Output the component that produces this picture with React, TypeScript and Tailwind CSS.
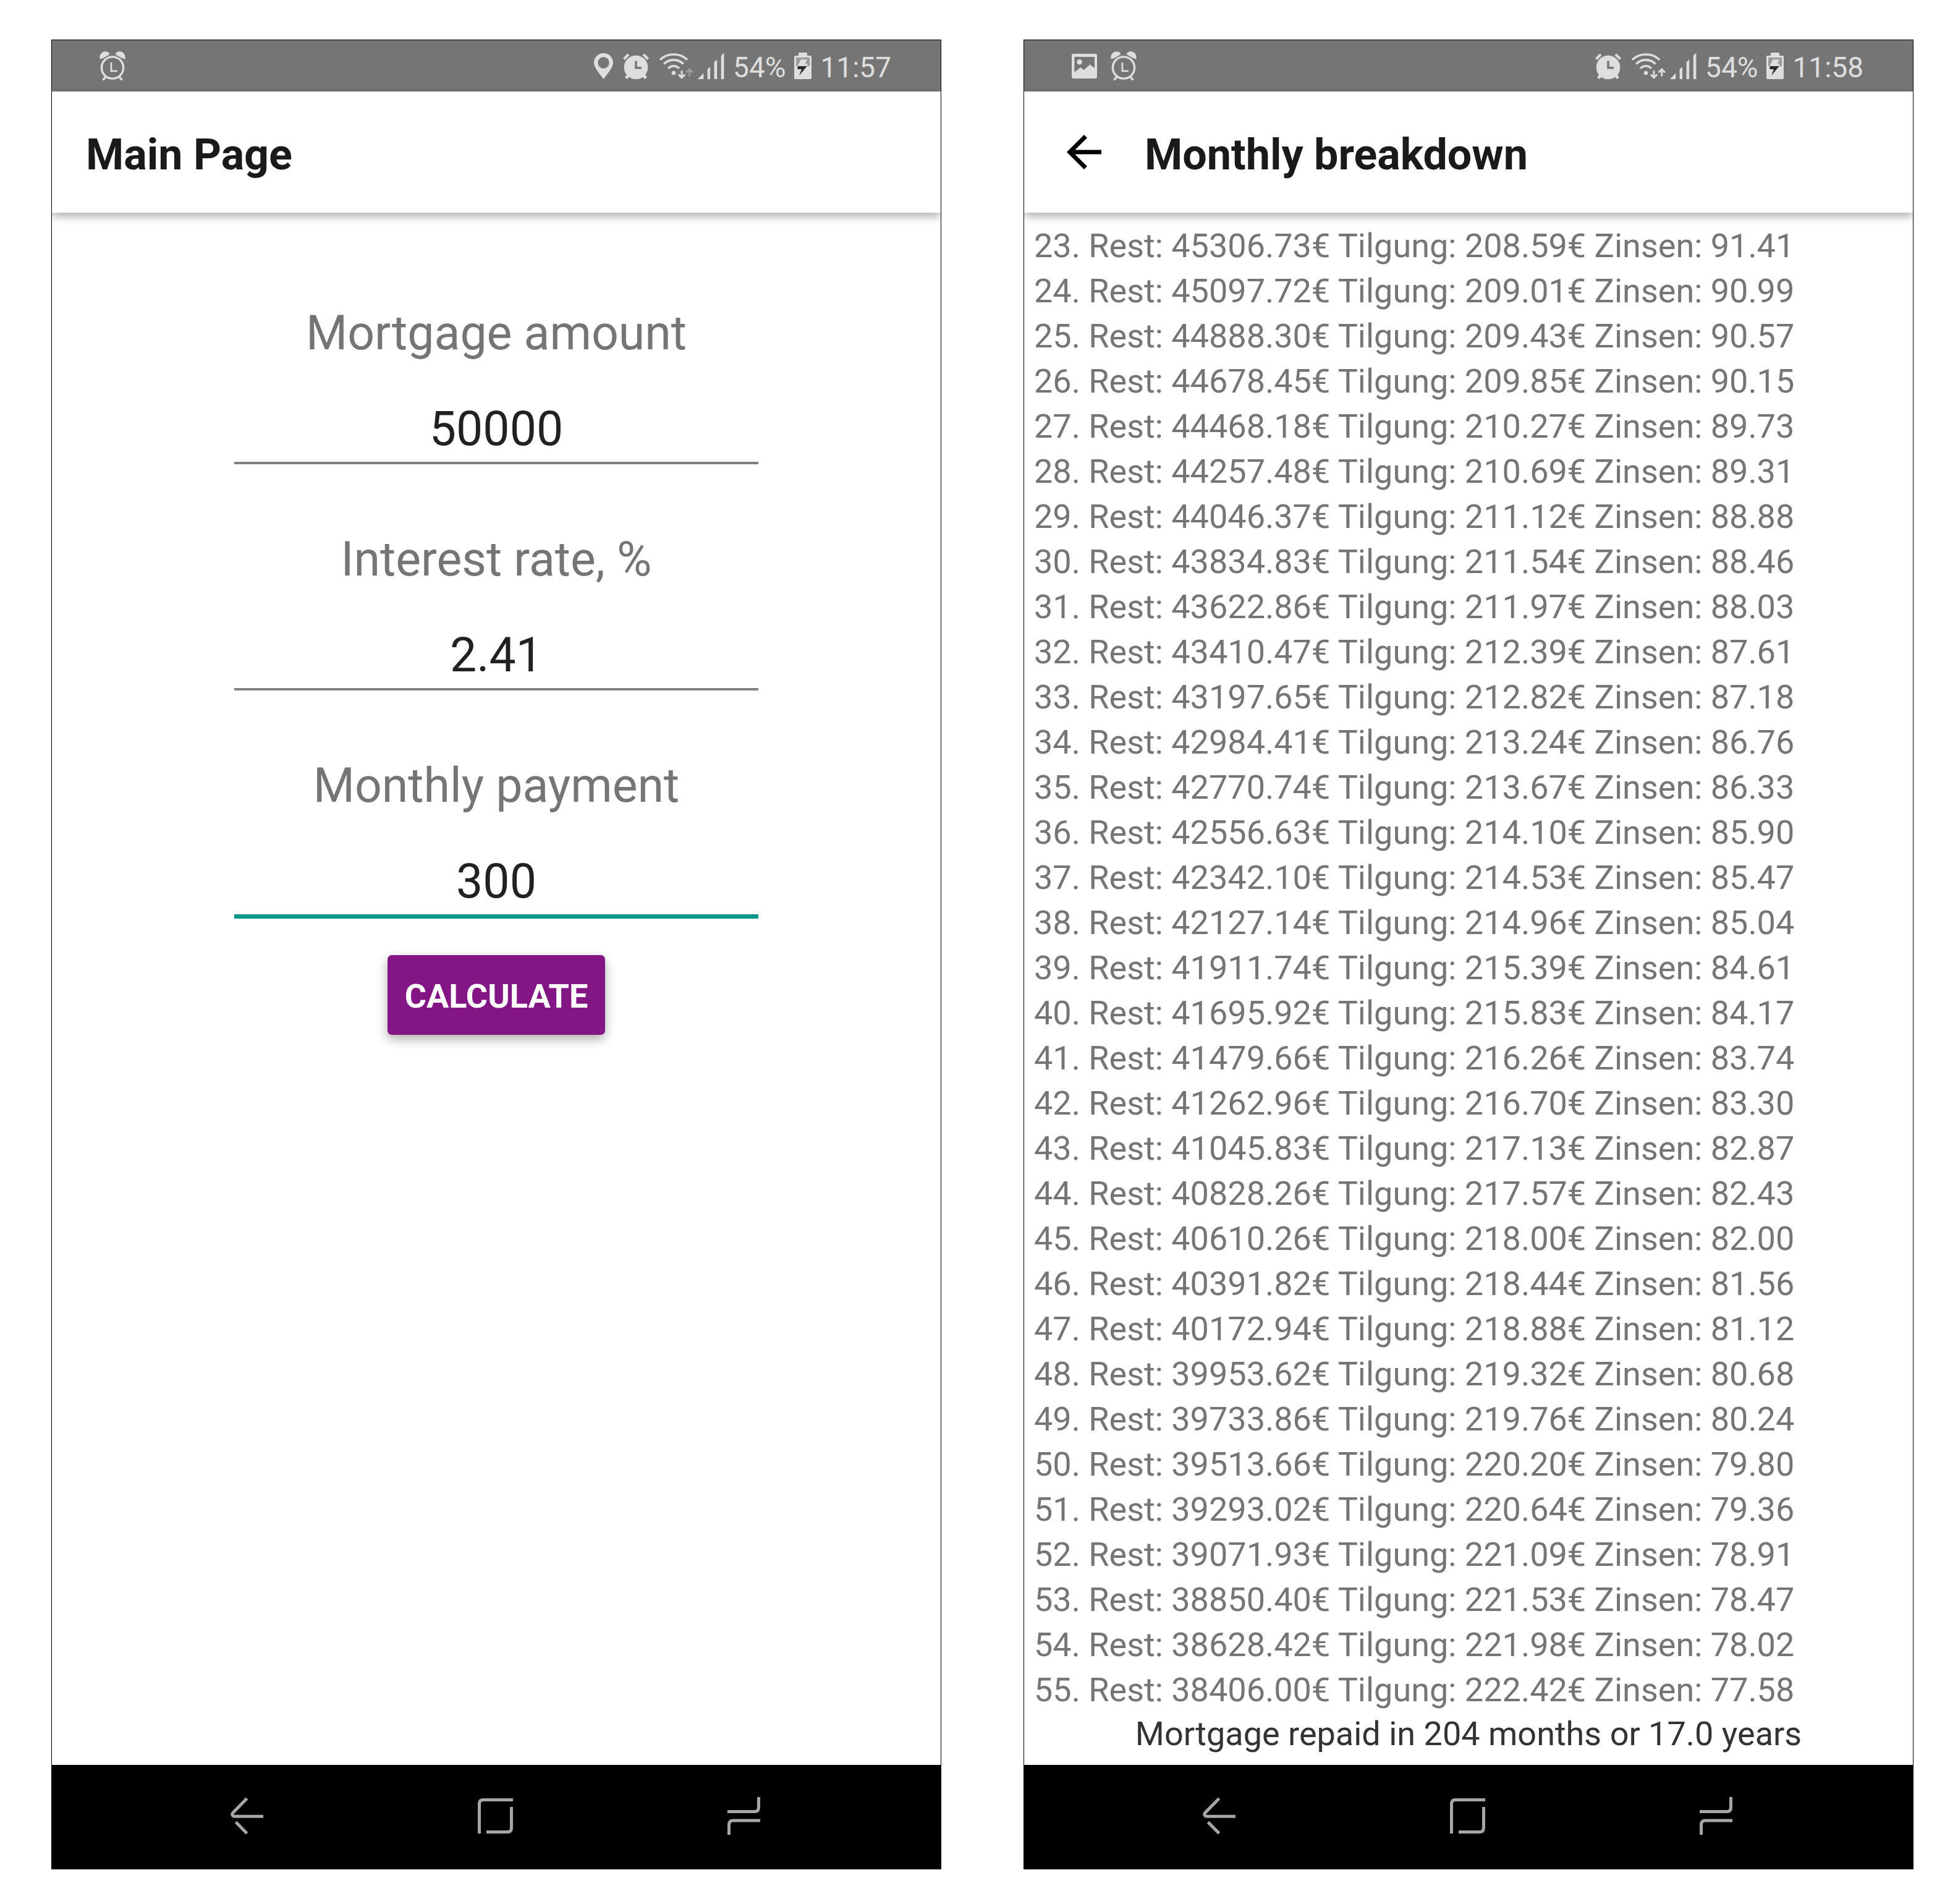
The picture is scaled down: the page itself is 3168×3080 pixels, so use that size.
import type { ReactNode } from 'react';

const rows: [number, string, string, string][] = [
  [23, '45306.73', '208.59', '91.41'],
  [24, '45097.72', '209.01', '90.99'],
  [25, '44888.30', '209.43', '90.57'],
  [26, '44678.45', '209.85', '90.15'],
  [27, '44468.18', '210.27', '89.73'],
  [28, '44257.48', '210.69', '89.31'],
  [29, '44046.37', '211.12', '88.88'],
  [30, '43834.83', '211.54', '88.46'],
  [31, '43622.86', '211.97', '88.03'],
  [32, '43410.47', '212.39', '87.61'],
  [33, '43197.65', '212.82', '87.18'],
  [34, '42984.41', '213.24', '86.76'],
  [35, '42770.74', '213.67', '86.33'],
  [36, '42556.63', '214.10', '85.90'],
  [37, '42342.10', '214.53', '85.47'],
  [38, '42127.14', '214.96', '85.04'],
  [39, '41911.74', '215.39', '84.61'],
  [40, '41695.92', '215.83', '84.17'],
  [41, '41479.66', '216.26', '83.74'],
  [42, '41262.96', '216.70', '83.30'],
  [43, '41045.83', '217.13', '82.87'],
  [44, '40828.26', '217.57', '82.43'],
  [45, '40610.26', '218.00', '82.00'],
  [46, '40391.82', '218.44', '81.56'],
  [47, '40172.94', '218.88', '81.12'],
  [48, '39953.62', '219.32', '80.68'],
  [49, '39733.86', '219.76', '80.24'],
  [50, '39513.66', '220.20', '79.80'],
  [51, '39293.02', '220.64', '79.36'],
  [52, '39071.93', '221.09', '78.91'],
  [53, '38850.40', '221.53', '78.47'],
  [54, '38628.42', '221.98', '78.02'],
  [55, '38406.00', '222.42', '77.58'],
];

function AlarmOutline() {
  return (
    <svg width="42" height="47" viewBox="0 0 42 47" fill="none" stroke="currentColor" aria-hidden="true">
      <circle cx="21" cy="26.5" r="17.6" strokeWidth="3.4" />
      <path d="M18.9 18v13.8h10" strokeWidth="2.8" />
      <path d="M10 41.5l-3.6 4M32 41.5l3.6 4" strokeWidth="3.4" strokeLinecap="round" />
      <path d="M.6 12.4C-.8 6 3.6.2 9.4.2c3 0 5.6 1.4 7 4-.6 1.400-3 2.200-6.200 4.400C7.400 10.600 4 12.200.6 12.400z" fill="currentColor" stroke="none" />
      <path d="M41.4 12.4C42.800 6 38.400.2 32.600.2c-3 0-5.600 1.400-7 4 .6 1.400 3 2.200 6.200 4.400 2.800 2 6.200 3.600 9.600 3.800z" fill="currentColor" stroke="none" />
    </svg>
  );
}

function AlarmFilled() {
  return (
    <svg width="42" height="42" viewBox="0 0 42 42" fill="none" stroke="currentColor" aria-hidden="true">
      <circle cx="21" cy="23" r="19.300" fill="currentColor" stroke="none" />
      <path d="M1.500 9.600L9 2M40.500 9.600L33 2" strokeWidth="4.200" />
      <path d="M10 34l-5 6.500M32 34l5 6.500" strokeWidth="5" />
      <path d="M21 12.500v11.200h9" stroke="#757575" strokeWidth="3.500" />
    </svg>
  );
}

function Picture() {
  return (
    <svg width="41" height="40" viewBox="0 0 41 40" fill="currentColor" aria-hidden="true">
      <path
        fillRule="evenodd"
        d="M3 0h35a3 3 0 013 3v34a3 3 0 01-3 3H3a3 3 0 01-3-3V3a3 3 0 013-3zM4.400 5v24.700L14.300 22l5.400 4.300 9.900-9L37 23.300V5z"
      />
      <circle cx="12.600" cy="13.300" r="4.300" />
    </svg>
  );
}

function Pin() {
  return (
    <svg width="31" height="42" viewBox="0 0 31 42" fill="currentColor" aria-hidden="true">
      <path
        fillRule="evenodd"
        d="M15.500 0C24 0 31 6.700 31 15.500 31 24 21 34 15.500 42 10 34 0 24 0 15.500 0 6.700 7 0 15.500 0zm0 6.300a9.200 9.200 0 100 18.400 9.200 9.200 0 000-18.400z"
      />
    </svg>
  );
}

function Wifi({ uploading }: { uploading: boolean }) {
  return (
    <svg width="56" height="42" viewBox="0 0 56 42" fill="none" stroke="currentColor" strokeWidth="3.600" aria-hidden="true">
      <path d="M1.800 10.700A32.700 32.700 0 0146.200 10.700" />
      <path d="M8.300 17.600A21.700 21.700 0 0139.700 17.600" />
      <path d="M15.300 24.800A11.500 11.500 0 0132.700 24.800" />
      <circle cx="24" cy="32" r="3.300" fill="currentColor" stroke="none" />
      <path d="M37 28.300v11M31.800 34.500l5.200 5.200 5.200-5.200" strokeWidth="3" />
      <path d="M49.700 37.500v-11M44.500 31.200l5.200-5.200 5.200 5.200" strokeWidth="3" stroke={uploading ? 'currentColor' : '#9b9b9b'} />
    </svg>
  );
}

function Signal() {
  return (
    <svg width="43" height="43" viewBox="0 0 43 43" fill="currentColor" aria-hidden="true">
      <path d="M0 43l9.300-9.500V43zM15.600 43V27l4.400-4v20zM26.600 43V15.500l4.600-4.200V43zM37.700 43V5l4.700-4.500V43z" />
    </svg>
  );
}

function Battery() {
  return (
    <svg width="28" height="43" viewBox="0 0 28 43" aria-hidden="true">
      <path fill="currentColor" d="M8.500 0h11a1.500 1.500 0 011.500 1.500V5h5a2 2 0 012 2v34a2 2 0 01-2 2H2a2 2 0 01-2-2V7a2 2 0 012-2h5V1.500A1.500 1.500 0 018.500 0z" />
      <path fill="#9b9b9b" d="M3 8h22v14H3z" />
      <path fill="currentColor" d="M10.600 11.300H21l-3.500 7H22L20.600 22H5.500z" />
      <path fill="#2b2b2b" d="M5.500 22h15.200L8 37.500 12 27H5.500z" />
    </svg>
  );
}

function StatusBar({ time, left, location, uploading }: { time: string; left: ReactNode; location?: boolean; uploading: boolean }) {
  return (
    <div className="flex h-[83px] items-center justify-between bg-[#757575] pr-20 pl-[77px] text-[#dedede]">
      <div className="flex items-center gap-[22px]">{left}</div>
      <div className="flex items-center gap-[14px]">
        <div className="flex items-center gap-4">
          {location && <Pin />}
          <AlarmFilled />
          <div className="flex items-center gap-[7px]">
            <Wifi uploading={uploading} />
            <Signal />
          </div>
        </div>
        <span className="pt-1 text-[46px] leading-none">54%</span>
        <Battery />
        <span className="pt-1 text-[46px] leading-none">{time}</span>
      </div>
    </div>
  );
}

function NavBar() {
  const button = 'flex cursor-pointer items-center justify-center';
  return (
    <nav className="grid h-[168px] grid-cols-3 bg-black pr-[118px] pb-1 pl-[114px] text-[#a6a6a6]" aria-label="System navigation">
      <button type="button" aria-label="Back" className={button}>
        <svg width="53" height="61" viewBox="0 0 53 61" fill="none" stroke="currentColor" strokeWidth="5">
          <path d="M26.500 2.300L3.800 25.500Q1 29.200 5.500 31.200H53" />
          <path d="M8.500 40.500L26.500 58.700" />
        </svg>
      </button>
      <button type="button" aria-label="Home" className={button}>
        <svg width="57" height="57" viewBox="0 0 57 57" fill="none" stroke="currentColor" strokeWidth="5">
          <path d="M2.500 57V9Q2.500 2.500 9 2.500H57" />
          <path d="M54.500 14V48Q54.500 54.500 48 54.500H14" />
        </svg>
      </button>
      <button type="button" aria-label="Recent apps" className={button}>
        <svg width="53" height="61" viewBox="0 0 53 61" fill="none" stroke="currentColor" strokeWidth="5">
          <path d="M50.500 0V16.500Q50.500 23.500 44 23.500H0" />
          <path d="M2.500 61V45Q2.500 38 9 38H53" />
        </svg>
      </button>
    </nav>
  );
}

function Phone({ status, title, back, children }: { status: ReactNode; title: string; back?: boolean; children: ReactNode }) {
  return (
    <section className="flex min-w-0 flex-1 flex-col overflow-hidden border border-black bg-white">
      {status}
      <header className="relative z-10 flex h-[196px] items-center gap-14 bg-white px-[55px] shadow-[0_6px_14px_rgba(0,0,0,0.32)]">
        {back && (
          <button type="button" aria-label="Go back" className="cursor-pointer text-black">
            <svg width="84" height="84" viewBox="0 0 24 24" fill="currentColor">
              <path d="M20 11H7.830l5.590-5.590L12 4l-8 8 8 8 1.410-1.410L7.830 13H20z" />
            </svg>
          </button>
        )}
        <h1 className="pt-2 text-[70px] leading-[80px] font-bold text-[#1a1a1a]">{title}</h1>
      </header>
      <main className="flex flex-1 flex-col">{children}</main>
      <NavBar />
    </section>
  );
}

function Field({ id, label, value, active }: { id: string; label: string; value: string; active?: boolean }) {
  return (
    <div className="flex w-full flex-col items-center gap-[65px]">
      <label htmlFor={id} className="text-[77px] leading-[90px] text-[#757575]">
        {label}
      </label>
      <input
        id={id}
        inputMode="decimal"
        defaultValue={value}
        className={
          'w-full pb-2 text-center text-[77px] leading-[90px] text-[#212121] outline-none ' +
          (active ? 'border-b-[7px] border-[#009688]' : 'border-b-4 border-[#808080]')
        }
      />
    </div>
  );
}

export default function App() {
  return (
    <div className="flex min-h-screen gap-[133px] bg-white pt-16 pr-[72px] pb-14 pl-[83px] font-['Roboto',sans-serif]">
      <Phone title="Main Page" status={<StatusBar time="11:57" location uploading={false} left={<AlarmOutline />} />}>
        <form className="mx-auto flex w-full max-w-[848px] flex-col items-center pt-[150px]" onSubmit={(e) => e.preventDefault()}>
          <div className="flex w-full flex-col gap-[109px]">
            <Field id="amount" label="Mortgage amount" value="50000" />
            <Field id="rate" label="Interest rate, %" value="2.41" />
            <Field id="payment" label="Monthly payment" value="300" active />
          </div>
          <button
            type="submit"
            className="mt-[59px] cursor-pointer rounded-[7px] bg-[#841584] px-7 pt-[35px] pb-[30px] text-[54px] leading-[64px] font-bold text-white shadow-[0_7px_18px_rgba(0,0,0,0.32)]"
          >
            CALCULATE
          </button>
        </form>
      </Phone>

      <Phone
        title="Monthly breakdown"
        back
        status={
          <StatusBar
            time="11:58"
            uploading
            left={
              <>
                <Picture />
                <AlarmOutline />
              </>
            }
          />
        }
      >
        <ol className="px-4 pt-[17px] text-[54px] leading-[73px] whitespace-nowrap text-[#757575]">
          {rows.map(([month, rest, repayment, interest]) => (
            <li key={month}>
              {month}. Rest: {rest}€ Tilgung: {repayment}€ Zinsen: {interest}
            </li>
          ))}
        </ol>
        <p className="text-center text-[54px] leading-[70px] text-[#333333]">Mortgage repaid in 204 months or 17.0 years</p>
      </Phone>
    </div>
  );
}
